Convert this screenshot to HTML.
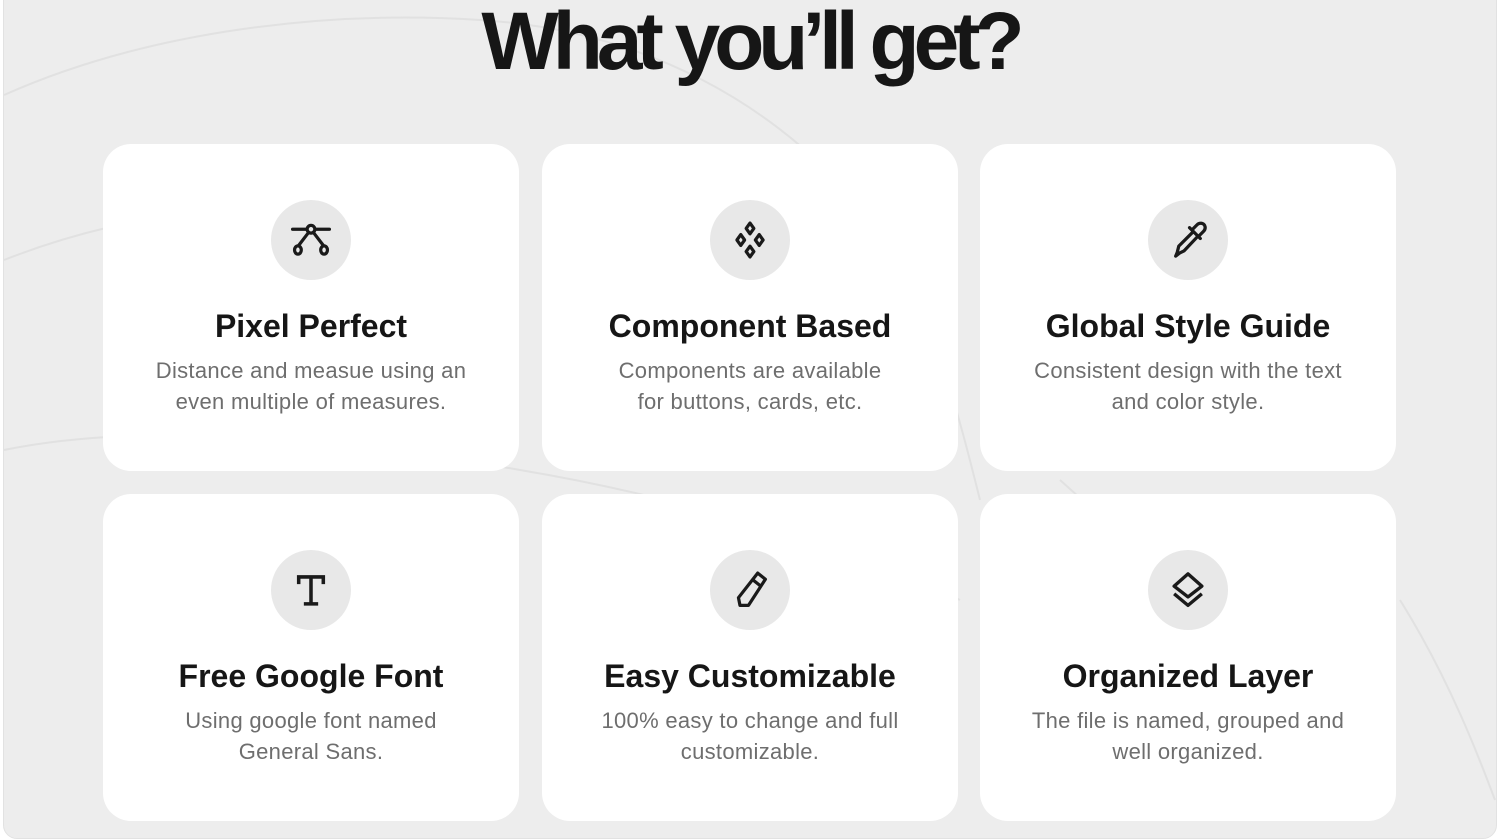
<!DOCTYPE html>
<html><head><meta charset="utf-8"><style>
html,body{margin:0;padding:0;background:#fff;}
body{width:1500px;height:840px;position:relative;overflow:hidden;font-family:"Liberation Sans",sans-serif;}
.frame{position:absolute;left:3px;top:-20px;width:1492px;height:857px;background:#ededed;border:1px solid #e2e2e2;border-radius:14px;overflow:hidden;}
svg.bg{position:absolute;left:0;top:0;}
h1{position:absolute;left:0;top:-8px;width:1500px;text-align:center;margin:0;font-size:82px;font-weight:700;letter-spacing:-6px;color:#161616;line-height:100px;}
.card{position:absolute;width:416px;height:327px;background:#fff;border-radius:28px;text-align:center;}
.ic{position:absolute;left:168px;top:56px;width:80px;height:80px;border-radius:50%;background:#e8e8e8;}
.ic svg{position:absolute;left:20px;top:20px;}
.t{position:absolute;left:0;right:0;top:164px;font-size:32px;font-weight:700;color:#161616;}
.d{position:absolute;left:0;right:0;top:211px;font-size:22px;line-height:31px;color:#6e6e6e;letter-spacing:0.3px;}
</style></head><body>
<div class="frame"></div>
<svg class="bg" width="1500" height="840" fill="none" stroke="#e1e1e1" stroke-width="2">
<path d="M4 95 C150 30 330 10 480 20 C640 30 780 100 880 230 C930 300 960 420 980 500"/>
<path d="M4 260 C80 230 140 220 200 210"/>
<path d="M4 450 C150 420 350 440 520 470 C700 500 880 560 960 600"/>
<path d="M1400 600 C1450 680 1480 760 1495 800"/>
<path d="M1060 480 C1150 560 1250 660 1320 780"/>
</svg>
<h1>What you’ll get?</h1>

<div class="card" style="left:103px;top:144px">
<div class="ic"><svg width="40" height="40" viewBox="7 7 26 26" fill="none" stroke="#1a1a1a" stroke-width="2.1" stroke-linecap="round"><path d="M8 13 H32"/><circle cx="20" cy="13" r="2.5" fill="#e8e8e8"/><path d="M18.5 15 L12 23.5 M21.5 15 L28 23.5"/><ellipse cx="11.5" cy="26.5" rx="2.2" ry="2.7" fill="#e8e8e8"/><ellipse cx="28.5" cy="26.5" rx="2.2" ry="2.7" fill="#e8e8e8"/></svg></div>
<div class="t">Pixel Perfect</div>
<div class="d">Distance and measue using an<br>even multiple of measures.</div></div>

<div class="card" style="left:542px;top:144px">
<div class="ic"><svg width="40" height="40" viewBox="7 7 26 26" fill="none" stroke="#1a1a1a" stroke-width="2.1" stroke-linejoin="round"><path d="M20 9 L22.5 12.5 L20 16 L17.5 12.5 Z"/><path d="M20 24 L22.5 27.5 L20 31 L17.5 27.5 Z"/><path d="M14 16.5 L16.5 20 L14 23.5 L11.5 20 Z"/><path d="M26 16.5 L28.5 20 L26 23.5 L23.5 20 Z"/></svg></div>
<div class="t">Component Based</div>
<div class="d">Components are available<br>for buttons, cards, etc.</div></div>

<div class="card" style="left:980px;top:144px">
<div class="ic"><svg width="40" height="40" viewBox="7 7 26 26" fill="none" stroke="#1a1a1a" stroke-width="2.1" stroke-linejoin="round" stroke-linecap="round"><path d="M23 13 L26 10 C27.5 8.5 30 9 30.8 10.5 C31.5 12 31 13.5 30 14.5 L27 17.5"/><path d="M21 12 L28 19"/><path d="M23 15 L14 24 L13 28 L12 30.5 L14.5 28.5 L17.5 27 L26 18"/></svg></div>
<div class="t">Global Style Guide</div>
<div class="d">Consistent design with the text<br>and color style.</div></div>

<div class="card" style="left:103px;top:494px">
<div class="ic"><svg width="40" height="40" viewBox="7 7 26 26" fill="none" stroke="#1a1a1a" stroke-width="2.3" stroke-linecap="square"><path d="M12 15 V11.5 H28 V15 M20 11.5 V29 M16.5 29 H23.5"/></svg></div>
<div class="t">Free Google Font</div>
<div class="d">Using google font named<br>General Sans.</div></div>

<div class="card" style="left:542px;top:494px">
<div class="ic"><svg width="40" height="40" viewBox="7 7 26 26" fill="none" stroke="#1a1a1a" stroke-width="2.1" stroke-linejoin="round"><path d="M25 9 L30 13 L19 30 L13.5 30 L12.5 25 Z"/><path d="M22 13.5 L27 17.5"/></svg></div>
<div class="t">Easy Customizable</div>
<div class="d">100% easy to change and full<br>customizable.</div></div>

<div class="card" style="left:980px;top:494px">
<div class="ic"><svg width="40" height="40" viewBox="7 7 26 26" fill="none" stroke="#1a1a1a" stroke-width="2.2" stroke-linejoin="round"><path d="M20 9.5 L29 17.5 L20 24.5 L11 17.5 Z"/><path d="M11 22.5 L20 30 L29 22.5"/></svg></div>
<div class="t">Organized Layer</div>
<div class="d">The file is named, grouped and<br>well organized.</div></div>
</body></html>
